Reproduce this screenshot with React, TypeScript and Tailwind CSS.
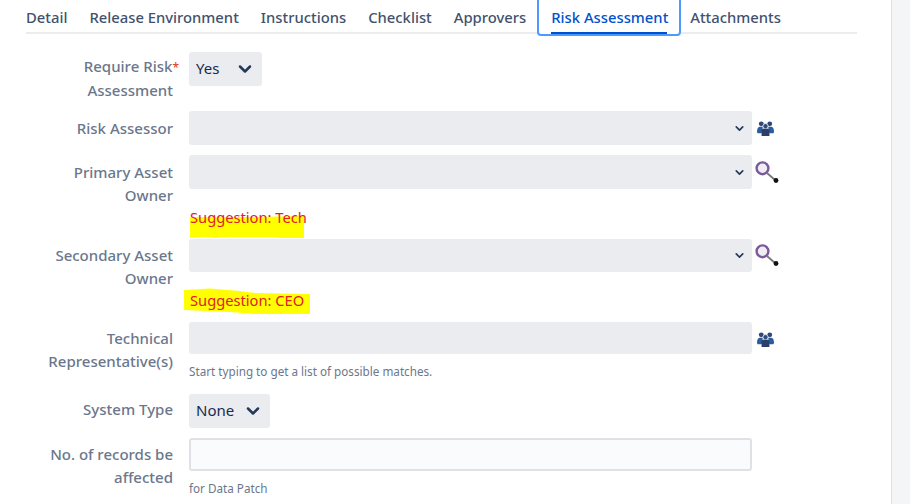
import React from 'react';
import { ChevronDown } from 'lucide-react';

const GroupIcon = () => (
  <svg width="17" height="15" viewBox="0 0 16 14" className="shrink-0">
    <circle cx="4" cy="2.6" r="2.3" fill="#2f4a7a" />
    <circle cx="12" cy="2.6" r="2.3" fill="#2f4a7a" />
    <path d="M0 10C0 6.5 1.5 5.3 3 5.3H5.5L4.5 11.5H0.5Z" fill="#2b5c9c" />
    <path d="M16 10C16 6.5 14.5 5.3 13 5.3H10.5L11.5 11.5H15.5Z" fill="#2b5c9c" />
    <circle cx="8" cy="4.8" r="2.4" fill="#2f4a7a" stroke="#fff" strokeWidth="0.6" />
    <path d="M4.3 8.8C4.3 7.7 5.1 7.2 6 7.2H10C10.9 7.2 11.7 7.7 11.7 8.8V14H4.3Z" fill="#2c3e6b" />
  </svg>
);

const SearchIcon = () => (
  <svg width="25" height="25" viewBox="0 0 25 25" className="shrink-0">
    <circle cx="8.5" cy="8.3" r="5.9" fill="#efedf3" stroke="#7a5a9c" strokeWidth="2.4" />
    <path d="M13 13L21 20" stroke="#77777f" strokeWidth="1.8" />
    <circle cx="22" cy="20.5" r="2.4" fill="#111" />
  </svg>
);

const Label = ({ children, className }: { children: React.ReactNode; className: string }) => (
  <label className={`w-[173px] shrink-0 text-right text-[#6b778c] font-medium text-[15px] leading-[23px] ${className}`}>{children}</label>
);

const SelectBox = ({ icon, height }: { icon: React.ReactNode; height: string }) => (
  <div className="flex items-center gap-[2px]">
    <div className={`w-[563px] ${height} bg-[#ebecf0] rounded-[3px] flex items-center justify-end pr-[6px]`}>
      <ChevronDown size={13} strokeWidth={3} className="text-[#253858]" />
    </div>
    {icon}
  </div>
);

const Dropdown = ({ value, width, textClass }: { value: string; width: string; textClass: string }) => (
  <div className={`${width} h-[34px] bg-[#ebecf0] rounded-[3px] flex items-center justify-between px-[7px] text-[15px] text-[#172b4d]`}>
    <span className={textClass}>{value}</span>
    <ChevronDown size={20} strokeWidth={3} className="text-[#253858]" />
  </div>
);

const Suggestion = ({ text, points, box }: { text: string; points: string; box: string }) => (
  <div className="relative h-[22px] leading-[22px] text-[14.7px] text-[#e0202a]">
    <svg className={`absolute ${box}`} width="135" height="36" viewBox="0 0 135 36">
      <polygon points={points} fill="#ffff00" />
    </svg>
    <span className="relative pl-px">{text}</span>
  </div>
);

export default function App() {
  const tabs = ['Detail', 'Release Environment', 'Instructions', 'Checklist', 'Approvers'];
  return (
    <div className="w-[910px] h-[504px] overflow-hidden bg-white flex text-[14px]" style={{ fontFamily: '"Noto Sans", sans-serif' }}>
      <div className="w-[891px] shrink-0 pl-[26px]">
        {/* Tabs */}
        <div className="w-[831px] h-[34px] border-b-2 border-[#ebecf0] flex items-start whitespace-nowrap text-[14.8px]">
          <div className="flex gap-[22px] h-[34px] leading-[34px] text-[#42526e] font-medium">
            {tabs.map((t) => (
              <span key={t}>{t}</span>
            ))}
          </div>
          <div className="ml-[11px] mt-[-6px] w-[144px] h-[42px] shrink-0 border-2 border-[#4c9aff] rounded-[4px] bg-white px-3 relative z-10 text-[#0052cc] font-medium leading-[42px]">
            <span className="block h-[38px] border-b-2 border-[#0052cc]">Risk Assessment</span>
          </div>
          <span className="ml-[9px] leading-[34px] text-[#42526e] font-medium">Attachments</span>
        </div>

        {/* Form */}
        <div className="w-[800px] -ml-[26px] pt-[18px] flex flex-col">
          <div className="flex items-start gap-4 h-[59px]">
            <Label className="pt-[3px]">Require Risk<span className="text-[#de350b] font-normal text-[12px] -mr-[6px]">*</span><br />Assessment</Label>
            <Dropdown value="Yes" width="w-[73px]" textClass="-mt-px" />
          </div>
          <div className="flex items-start gap-4 h-[44px]">
            <Label className="pt-[6px]">Risk Assessor</Label>
            <div className="flex items-center gap-[5px]">
              <SelectBox height="h-[34px]" icon={null} />
              <GroupIcon />
            </div>
          </div>
          <div className="flex items-start gap-4 h-[84px]">
            <Label className="pt-[6px]">Primary Asset<br />Owner</Label>
            <div>
              <SelectBox height="h-[34px]" icon={<SearchIcon />} />
              <div className="h-[17px]" />
              <Suggestion text="Suggestion: Tech" box="left-[-9px] top-[-1px]" points="10,12 70,12 124,11 124,33 100,33 90,32 50,32 35,33 25,32 10,33" />
            </div>
          </div>
          <div className="flex items-start gap-4 h-[83px]">
            <Label className="pt-[5px]">Secondary Asset<br />Owner</Label>
            <div>
              <SelectBox height="h-[33px]" icon={<SearchIcon />} />
              <div className="h-[17px]" />
              <Suggestion text="Suggestion: CEO" box="left-[-9px] top-[-4px]" points="4,5 30,3.5 60,6 75,8 130,9 130,29 75,29 50,27 4,25" />
            </div>
          </div>
          <div className="flex items-start gap-4 h-[72px]">
            <Label className="pt-[5px]">Technical<br />Representative(s)</Label>
            <div>
              <div className="flex items-start gap-[5px]">
                <div className="w-[563px] h-[32px] bg-[#ebecf0] rounded-[3px]" />
                <div className="pt-[10px]"><GroupIcon /></div>
              </div>
              <p className="mt-[9px] text-[11.7px] leading-[16px] text-[#6b778c]">Start typing to get a list of possible matches.</p>
            </div>
          </div>
          <div className="flex items-start gap-4 h-[44px]">
            <Label className="pt-[4px]">System Type</Label>
            <Dropdown value="None" width="w-[81px]" textClass="-mt-0.5" />
          </div>
          <div className="flex items-start gap-4">
            <Label className="pt-[5px]">No. of records be<br />affected</Label>
            <div>
              <div className="w-[563px] h-[33px] bg-[#fafbfc] border-2 border-[#dfe1e6] rounded-[3px]" />
              <p className="mt-[9px] text-[11.7px] leading-[16px] text-[#6b778c]">for Data Patch</p>
            </div>
          </div>
        </div>
      </div>
      <div className="flex-1 bg-[#f4f5f7] border-l border-[#dfe1e6]" />
    </div>
  );
}
